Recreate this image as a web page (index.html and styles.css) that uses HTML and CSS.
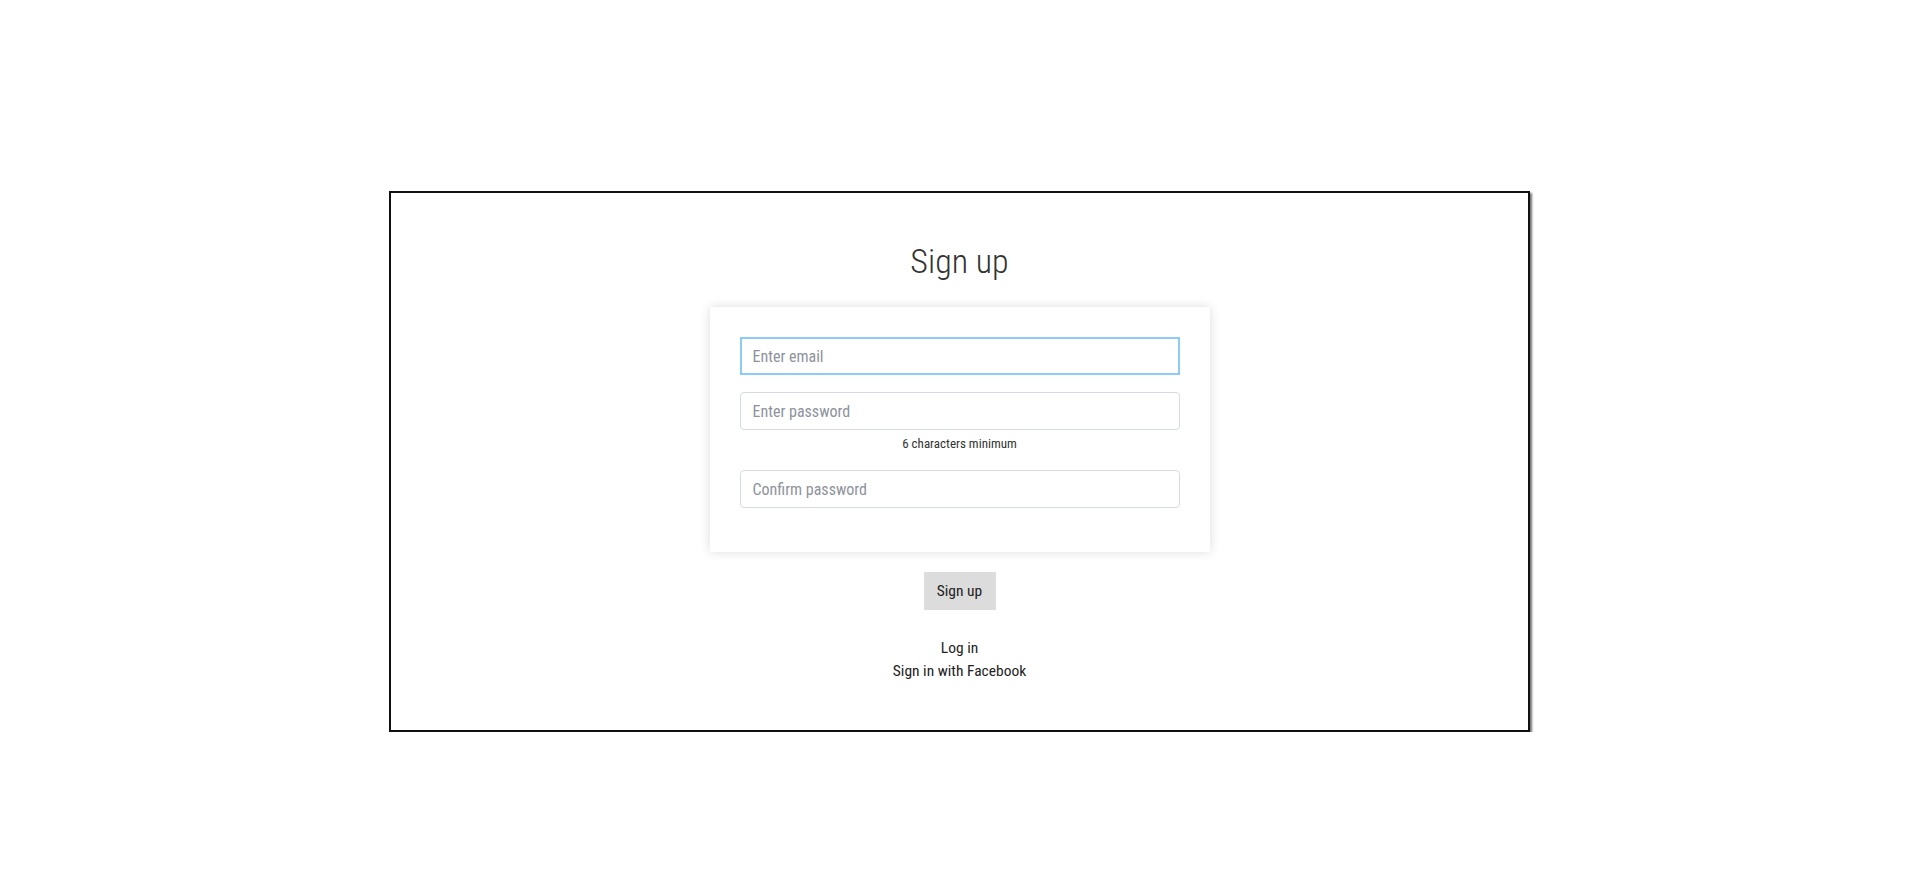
FILE: index.html
```html
<!DOCTYPE html>
<html lang="en">
<head>
<meta charset="utf-8">
<title>Sign up</title>
<link rel="stylesheet" href="styles.css">
</head>
<body>
<div class="frame">
  <h1 class="title">Sign up</h1>
  <form class="card">
    <input class="field field-focus" type="email" placeholder="Enter email">
    <input class="field" type="password" placeholder="Enter password">
    <div class="hint">6 characters minimum</div>
    <input class="field" type="password" placeholder="Confirm password">
  </form>
  <button class="btn" type="button">Sign up</button>
  <div class="links">
    <a class="link" href="#">Log in</a>
    <a class="link" href="#">Sign in with Facebook</a>
  </div>
</div>
</body>
</html>
```
FILE: styles.css
```css
html, body {
  margin: 0;
  padding: 0;
  background: #fff;
}
body {
  font-family: "Liberation Sans Narrow", "Roboto Condensed", Roboto, "Liberation Sans", sans-serif;
  color: #222;
}
.frame {
  box-sizing: border-box;
  width: 1141px;
  height: 541px;
  margin: 191px auto 0;
  border: 2px solid #111;
  box-shadow: 2px 2px 2px rgba(0, 0, 0, 0.55);
  display: flex;
  flex-direction: column;
  align-items: center;
  padding-top: 44px;
}
.title {
  margin: 0;
  font-family: "Liberation Sans Narrow", "Roboto Condensed", "Open Sans", sans-serif;
  font-weight: 300;
  font-size: 34px;
  line-height: 48px;
  color: #333;
}
.card {
  box-sizing: border-box;
  width: 500px;
  margin-top: 22px;
  padding: 30px 30px 28px;
  background: #fff;
  box-shadow: 0 0 10px rgba(0, 0, 0, 0.14);
  display: flex;
  flex-direction: column;
}
.field {
  box-sizing: border-box;
  width: 440px;
  height: 38px;
  margin: 0 0 16px;
  padding: 0 12px;
  border: 1px solid #d6dbe1;
  border-radius: 4px;
  font-family: inherit;
  font-size: 16px;
  color: #333;
  background: #fff;
  outline: none;
}
.field::placeholder {
  color: #8d939b;
}
.field-focus {
  border: 2px solid #8ccafa;
  border-radius: 0;
  padding-left: 11px;
  margin-bottom: 17px;
}
.hint {
  margin: -12px 0 16px;
  font-size: 13px;
  line-height: 20px;
  color: #333;
  text-align: center;
}
.btn {
  margin-top: 20px;
  width: 72px;
  height: 38px;
  border: none;
  background: #dcdcdc;
  font-family: inherit;
  font-size: 15.5px;
  color: #222;
  padding: 0;
}
.links {
  margin-top: 27px;
  display: flex;
  flex-direction: column;
  align-items: center;
}
.link {
  font-size: 15.5px;
  line-height: 23px;
  color: #222;
  text-decoration: none;
}
```
